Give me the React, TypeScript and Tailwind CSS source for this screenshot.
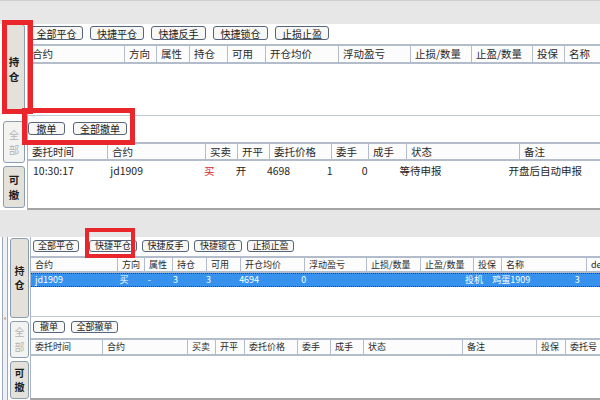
import React from "react";

interface Col {
    label: string;
    w: string;
}

const posColsTop: Col[] = [
    { label: "合约", w: "w-[97px]" },
    { label: "方向", w: "w-[32px]" },
    { label: "属性", w: "w-[33px]" },
    { label: "持仓", w: "w-[38px]" },
    { label: "可用", w: "w-[38px]" },
    { label: "开仓均价", w: "w-[73px]" },
    { label: "浮动盈亏", w: "w-[72px]" },
    { label: "止损/数量", w: "w-[61px]" },
    { label: "止盈/数量", w: "w-[61px]" },
    { label: "投保", w: "w-[32px]" },
    { label: "名称", w: "w-[60px]" },
];

const ordColsTop: Col[] = [
    { label: "委托时间", w: "w-[80px]" },
    { label: "合约", w: "w-[98px]" },
    { label: "买卖", w: "w-[32px]" },
    { label: "开平", w: "w-[32px]" },
    { label: "委托价格", w: "w-[62px]" },
    { label: "委手", w: "w-[37px]" },
    { label: "成手", w: "w-[38px]" },
    { label: "状态", w: "w-[113px]" },
    { label: "备注", w: "w-[100px]" },
];

const posColsBottom: Col[] = [
    { label: "合约", w: "w-[87px]" },
    { label: "方向", w: "w-[27px]" },
    { label: "属性", w: "w-[28px]" },
    { label: "持仓", w: "w-[34px]" },
    { label: "可用", w: "w-[34px]" },
    { label: "开仓均价", w: "w-[64px]" },
    { label: "浮动盈亏", w: "w-[62px]" },
    { label: "止损/数量", w: "w-[54px]" },
    { label: "止盈/数量", w: "w-[53px]" },
    { label: "投保", w: "w-[28px]" },
    { label: "名称", w: "w-[85px]" },
    { label: "del", w: "w-[30px]" },
];

const ordColsBottom: Col[] = [
    { label: "委托时间", w: "w-[72px]" },
    { label: "合约", w: "w-[85px]" },
    { label: "买卖", w: "w-[28px]" },
    { label: "开平", w: "w-[29px]" },
    { label: "委托价格", w: "w-[53px]" },
    { label: "委手", w: "w-[33px]" },
    { label: "成手", w: "w-[33px]" },
    { label: "状态", w: "w-[99px]" },
    { label: "备注", w: "w-[74px]" },
    { label: "投保", w: "w-[29px]" },
    { label: "委托号", w: "w-[40px]" },
];

const Btn: React.FC<{ label: string; className?: string }> = ({ label, className = "" }) => (
    <div className={`flex items-center justify-center rounded-[3px] border border-[#56657a] bg-[#f7f7f5] text-[#1a1a1a] shrink-0 ${className}`}>
        {label}
    </div>
);

const Tab: React.FC<{ label: string; active?: boolean; className?: string }> = ({ label, active, className = "" }) => (
    <div
        className={`flex flex-col items-center justify-center rounded-[3px] border border-[#8b9db3] leading-[1.45] ${
            active ? "bg-[#e4e1da] text-[#1c1c1c] font-bold" : "bg-[#f3f3f1] text-[#b4b4b4]"
        } ${className}`}
    >
        {label.split("").map((c, i) => (
            <span key={i}>{c}</span>
        ))}
    </div>
);

const Header: React.FC<{ cols: Col[]; className?: string }> = ({ cols, className = "" }) => (
    <div className={`flex border-y-2 border-[#b3bccb] bg-[#fcfcfc] text-[#2a2a2a] overflow-hidden ${className}`}>
        {cols.map((c, i) => (
            <div key={i} className={`${c.w} shrink-0 flex items-center pl-[4px] border-r border-[#b3bccb] whitespace-nowrap overflow-hidden`}>
                {c.label}
            </div>
        ))}
    </div>
);

const App: React.FC = () => {
    return (
        <div className="w-[600px] h-[400px] overflow-hidden bg-white relative font-['Noto_Sans_CJK_SC','Noto_Sans',sans-serif]">

            {/* top toolbar strip */}
            <div className="h-[24px] bg-[#e7e7e7] border-t border-[#cfcfcf]" />

            {/* top panel */}
            <div className="flex h-[186px] text-[10.5px]">
                <div className="w-[27px] flex flex-col pl-[3px] pr-[2px] shrink-0">
                    <Tab label="持仓" active className="h-[90px]" />
                    <div className="h-[7px]" />
                    <Tab label="全部" className="h-[42px]" />
                    <div className="h-[3px]" />
                    <Tab label="可撤" active className="h-[42px]" />
                </div>
                <div className="flex-1 flex flex-col border-l border-[#a9b5c6] border-b-2 border-b-[#a4a4a4] min-w-0">
                    <div className="h-[92px] border-b border-[#c3cad5] flex flex-col">
                        <div className="flex gap-[7px] pt-[2px] pl-[2px] text-[10px]">
                            <Btn label="全部平仓" className="w-[53px] h-[14px]" />
                            <Btn label="快捷平仓" className="w-[54px] h-[14px]" />
                            <Btn label="快捷反手" className="w-[55px] h-[14px]" />
                            <Btn label="快捷锁仓" className="w-[55px] h-[14px]" />
                            <Btn label="止损止盈" className="w-[54px] h-[14px]" />
                        </div>
                        <Header cols={posColsTop} className="mt-[4px] h-[20px]" />
                    </div>
                    <div className="flex-1 flex flex-col">
                        <div className="flex gap-[8px] pt-[6px] text-[10px]">
                            <Btn label="撤单" className="w-[37px] h-[13px]" />
                            <Btn label="全部撤单" className="w-[54px] h-[13px]" />
                        </div>
                        <Header cols={ordColsTop} className="mt-[7px] h-[19px]" />
                        <div className="flex h-[20px] items-center text-[#1e1e1e]">
                            <div className="w-[80px] pl-[5px]">10:30:17</div>
                            <div className="w-[98px] pl-[5px]">jd1909</div>
                            <div className="w-[32px] pl-[4px] text-[#d42a2a]">买</div>
                            <div className="w-[32px] pl-[5px]">开</div>
                            <div className="w-[62px] pl-[5px]">4698</div>
                            <div className="w-[37px] pl-[5px]">1</div>
                            <div className="w-[38px] pl-[4px]">0</div>
                            <div className="w-[113px] pl-[5px]">等待申报</div>
                            <div className="w-[100px] pl-[5px] whitespace-nowrap">开盘后自动申报</div>
                        </div>
                    </div>
                </div>
            </div>

            {/* gap between panels */}
            <div className="h-[27px] bg-[#e6e6e6]" />

            {/* bottom panel */}
            <div className="flex h-[163px] text-[9px]">
                <div className="w-[9px] shrink-0 pl-[2px] pr-[1px]">
                    <div className="h-full border-x border-[#9aa8ba] bg-[#eef0f3] flex items-center justify-center text-[7px] leading-none text-[#333] pb-[2px]">
                        ‹
                    </div>
                </div>
                <div className="w-[21px] shrink-0 flex flex-col pl-[1px] pr-[1px] text-[10px]">
                    <Tab label="持仓" active className="h-[80px] mt-[1px]" />
                    <div className="h-[3px]" />
                    <Tab label="全部" className="h-[37px]" />
                    <div className="h-[3px]" />
                    <Tab label="可撤" active className="h-[38px]" />
                </div>
                <div className="flex-1 flex flex-col border-l border-[#a9b5c6] border-b-2 border-b-[#a4a4a4] min-w-0">
                    <div className="h-[80px] border-b border-[#c3cad5] flex flex-col">
                        <div className="flex gap-[5px] pt-[3px] pl-[2px] text-[9px]">
                            <Btn label="全部平仓" className="w-[46px] h-[12px]" />
                            <Btn label="快捷平仓" className="w-[48px] h-[12px] ml-[5px]" />
                            <Btn label="快捷反手" className="w-[47px] h-[12px]" />
                            <Btn label="快捷锁仓" className="w-[48px] h-[12px]" />
                            <Btn label="止损止盈" className="w-[47px] h-[12px]" />
                        </div>
                        <Header cols={posColsBottom} className="mt-[4px] h-[17px]" />
                        <div className="flex h-[14px] items-center bg-[#3792ee] text-white border-y border-dotted border-[#3a3a3a]">
                            <div className="w-[87px] pl-[4px]">jd1909</div>
                            <div className="w-[27px] pl-[4px]">买</div>
                            <div className="w-[28px] pl-[6px]">-</div>
                            <div className="w-[34px] pl-[4px]">3</div>
                            <div className="w-[34px] pl-[4px]">3</div>
                            <div className="w-[64px] pl-[4px]">4694</div>
                            <div className="w-[62px] pl-[4px]">0</div>
                            <div className="w-[54px]" />
                            <div className="w-[53px]" />
                            <div className="w-[28px] pl-[4px]">投机</div>
                            <div className="w-[85px] pl-[4px]">鸡蛋1909</div>
                            <div className="w-[30px] pl-[4px]">3</div>
                        </div>
                    </div>
                    <div className="flex-1 flex flex-col">
                        <div className="flex gap-[6px] pt-[4px] pl-[2px] text-[9px]">
                            <Btn label="撤单" className="w-[32px] h-[12px]" />
                            <Btn label="全部撤单" className="w-[47px] h-[12px]" />
                        </div>
                        <Header cols={ordColsBottom} className="mt-[5px] h-[18px]" />
                    </div>
                </div>
            </div>

            {/* red annotation boxes */}
            <div className="absolute left-[2px] top-[20px] w-[31px] h-[94px] border-[5px] border-[#e8262b]" />
            <div className="absolute left-[22px] top-[108px] w-[113px] h-[37px] border-[5px] border-[#e8262b]" />
            <div className="absolute left-[85px] top-[228px] w-[50px] h-[30px] border-[4px] border-[#e8262b]" />
        </div>
    );
};

export default App;
